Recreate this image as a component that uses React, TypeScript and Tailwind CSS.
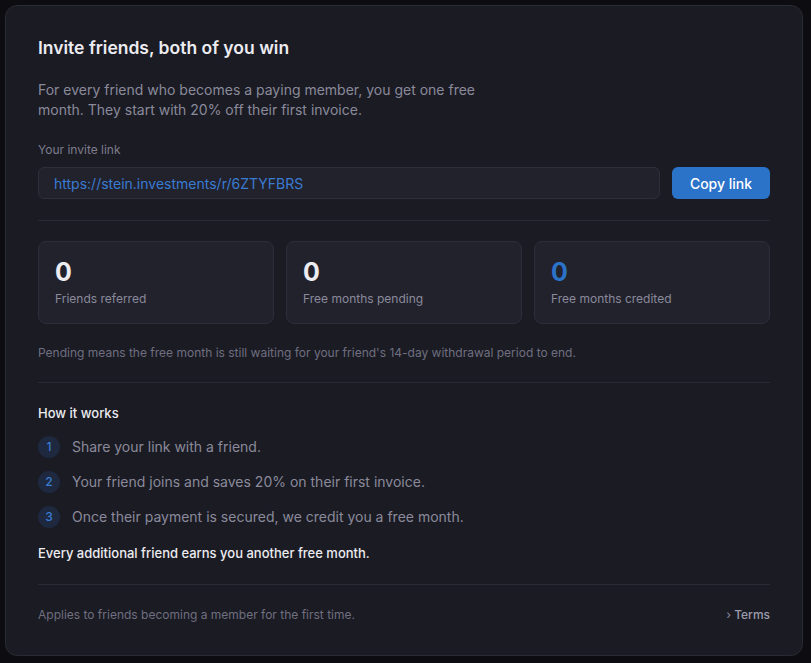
import React from "react";

const stats = [
  { value: "0", label: "Friends referred", blue: false },
  { value: "0", label: "Free months pending", blue: false },
  { value: "0", label: "Free months credited", blue: true },
];

const steps = [
  "Share your link with a friend.",
  "Your friend joins and saves 20% on their first invoice.",
  "Once their payment is secured, we credit you a free month.",
];

export default function App() {
  return (
    <div
      className="min-h-[663px] w-full bg-[#0c0c11] pt-[5px] pl-[5px]"
      style={{ fontFamily: "Inter, 'Noto Sans', sans-serif" }}
    >
      <div className="w-[798px] rounded-[12px] border border-[#2a2a34] bg-[#1b1b23] px-8 pt-[32px] pb-[32px]">
        <h1 className="text-[17.5px] leading-5 font-semibold text-[#ececf1]">
          Invite friends, both of you win
        </h1>
        <p className="mt-[22px] max-w-[445px] text-[14px] leading-5 text-[#8a8a9b]">
          For every friend who becomes a paying member, you get one free month. They start with 20% off their first invoice.
        </p>

        <div className="mt-[22px] text-[12px] leading-4 text-[#7d7d8d]">Your invite link</div>
        <div className="mt-[9px] flex gap-3">
          <div className="flex h-[32px] flex-1 items-center rounded-[6px] border border-[#2f2f3b] bg-[#22222d] px-[15px] text-[14px] text-[#3a7bd2]">
            https://stein.investments/r/6ZTYFBRS
          </div>
          <button className="h-[32px] w-[98px] rounded-[6px] bg-[#2b73c9] text-[14px] font-medium text-white">
            Copy link
          </button>
        </div>

        <div className="mt-[21px] h-px bg-[#2a2a34]" />

        <div className="mt-5 grid grid-cols-3 gap-3">
          {stats.map((s) => (
            <div
              key={s.label}
              className="h-[83px] rounded-[8px] border border-[#2e2e3a] bg-[#22222d] px-4 pt-[18px]"
            >
              <div
                className={
                  "text-[25px] leading-[25px] font-bold " +
                  (s.blue ? "text-[#2b73c9]" : "text-[#ececf1]")
                }
              >
                {s.value}
              </div>
              <div className="mt-[6px] text-[12px] leading-4 text-[#8a8a9b]">{s.label}</div>
            </div>
          ))}
        </div>

        <p className="mt-[21px] text-[12px] leading-4 text-[#6f6f80]">
          Pending means the free month is still waiting for your friend's 14-day withdrawal period to end.
        </p>

        <div className="mt-[21px] h-px bg-[#2a2a34]" />

        <h2 className="mt-5 text-[13px] leading-5 font-medium text-[#ececf1]">How it works</h2>
        <div className="mt-[13px] flex flex-col gap-[13px]">
          {steps.map((t, i) => (
            <div key={i} className="flex h-[22px] items-center gap-3">
              <div className="flex h-[22px] w-[22px] items-center justify-center rounded-full bg-[#1e2940] text-[12px] font-medium text-[#3a7bd2]">
                {i + 1}
              </div>
              <div className="text-[14px] leading-[22px] text-[#8a8a9b]">{t}</div>
            </div>
          ))}
        </div>

        <p className="mt-[15px] text-[13px] leading-5 font-medium text-[#ececf1]">
          Every additional friend earns you another free month.
        </p>

        <div className="mt-[21px] h-px bg-[#2a2a34]" />

        <div className="mt-[22px] flex items-center justify-between text-[12px] leading-4">
          <span className="text-[#6f6f80]">Applies to friends becoming a member for the first time.</span>
          <span className="font-medium text-[#9b9bab]">
            <span className="text-[#7d7d8d]">›</span> Terms
          </span>
        </div>
      </div>
    </div>
  );
}
